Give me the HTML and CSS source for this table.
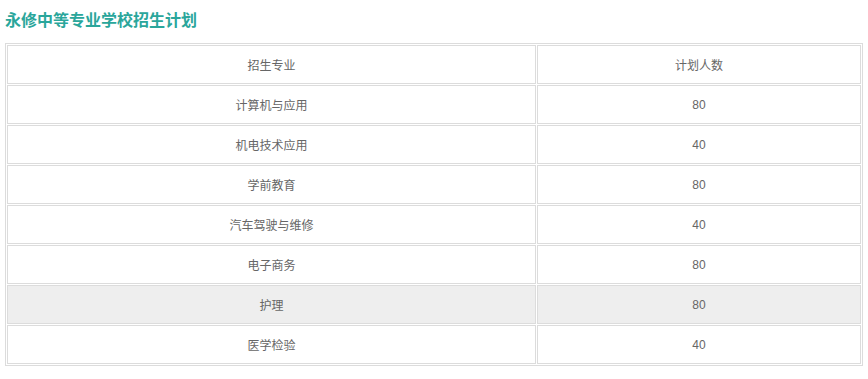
FILE: index.html
```html
<!DOCTYPE html>
<html lang="zh">
<head>
<meta charset="utf-8">
<link rel="stylesheet" href="styles.css">
</head>
<body>
<div class="page">
  <h2 class="title">永修中等专业学校招生计划</h2>
  <table class="plan">
    <colgroup><col class="c1"><col class="c2"></colgroup>
    <tr><td>招生专业</td><td>计划人数</td></tr>
    <tr><td>计算机与应用</td><td>80</td></tr>
    <tr><td>机电技术应用</td><td>40</td></tr>
    <tr><td>学前教育</td><td>80</td></tr>
    <tr><td>汽车驾驶与维修</td><td>40</td></tr>
    <tr><td>电子商务</td><td>80</td></tr>
    <tr class="hl"><td>护理</td><td>80</td></tr>
    <tr><td>医学检验</td><td>40</td></tr>
  </table>
</div>
</body>
</html>
```
FILE: styles.css
```css
html, body { margin: 0; padding: 0; background: #fff; }
.page {
  padding: 8px 5px 0 5px;
  font-family: "Microsoft YaHei", "Noto Sans CJK SC", "Liberation Sans", sans-serif;
}
.title {
  margin: 0;
  font-size: 16px;
  line-height: 22px;
  font-weight: bold;
  color: #2aa69b;
}
.plan {
  margin-top: 13px;
  width: 858px;
  border: 1px solid #dcdcdc;
  border-spacing: 1px;
  table-layout: fixed;
  font-size: 12px;
  color: #666;
}
.c1 { width: 529px; }
.c2 { width: 324px; }
.plan td {
  height: 37px;
  padding: 0;
  border: 1px solid #dcdcdc;
  text-align: center;
  vertical-align: middle;
  font-family: "Liberation Sans", "Noto Sans CJK SC", sans-serif;
}
.plan tr.hl td { background: #eeeeee; }
```
